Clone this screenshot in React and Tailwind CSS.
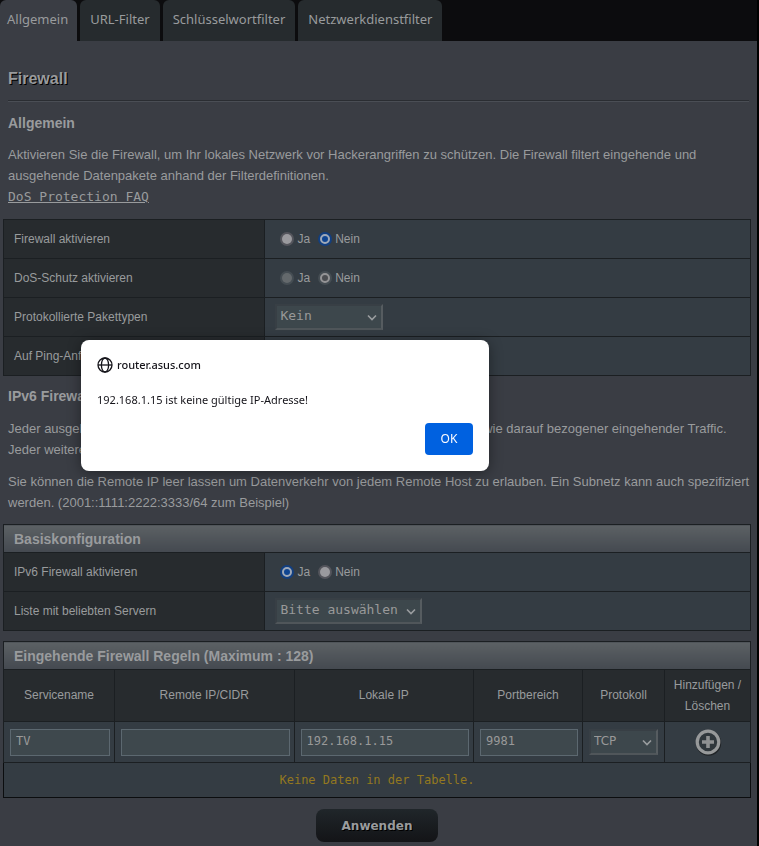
import { useState } from 'react';
import { clsx } from 'clsx';

const TABS = ['Allgemein', 'URL-Filter', 'Schlüsselwortfilter', 'Netzwerkdienstfilter'];

function Radio({ name, label, checked = false, disabled = false }) {
  return (
    <label className="flex items-center gap-[3px]">
      <input
        type="radio"
        name={name}
        defaultChecked={checked}
        disabled={disabled}
        className={clsx(
          'm-[2px] h-[10px] w-[10px] appearance-none rounded-full ring-2 checked:border-2',
          disabled
            ? 'bg-[#64696c] ring-[#454d53] checked:border-[#949496] checked:bg-[#4b4d51]'
            : 'bg-[#9a9a9e] ring-[#54555c] checked:border-[#9fa9b8] checked:bg-[#0f4592] checked:ring-[#123f80]'
        )}
      />
      {label}
    </label>
  );
}

function Select({ label, value, className }) {
  return (
    <div className="relative inline-block align-middle">
      <select
        aria-label={label}
        defaultValue={value}
        className={clsx(
          'block h-[26px] appearance-none border-2 border-t-[#383f45] border-r-[#565c60] border-b-[#50565a] border-l-[#383f45] bg-[#3d474c] pb-[2px] pl-[3px] text-[#999999]',
          className
        )}
      >
        <option>{value}</option>
      </select>
      <svg className="pointer-events-none absolute top-[10px] right-[6px] h-[8px] w-[10px]" viewBox="0 0 10 8" fill="none" stroke="#9a9d9f">
        <path strokeWidth="1.6" d="M1 1.5l4 4 4-4" />
      </svg>
    </div>
  );
}

function Row({ label, children }) {
  return (
    <tr className="h-[39px]">
      <th scope="row" className="w-[35%] border border-[#1b1f22] bg-[#272b2e] px-[10px] text-left font-normal">{label}</th>
      <td className="border border-[#1b1f22] bg-[#343c43] px-[10px]">{children}</td>
    </tr>
  );
}

function TableTitle({ children }) {
  return (
    <tr className="h-[28px]">
      <th
        colSpan={6}
        className="border border-[#1b1f22] bg-linear-to-b from-[#5c6164] to-[#444950] px-[10px] text-left text-[14px] leading-[20px] font-bold"
      >
        {children}
      </th>
    </tr>
  );
}

function Field({ label, value = '' }) {
  return (
    <td className="border border-[#1b1f22] bg-[#343c43] pr-[4px] pl-[6px]">
      <input
        type="text"
        aria-label={label}
        defaultValue={value}
        className="block h-[27px] w-full border border-[#5c6870] bg-[#3e484d] px-[5px] pb-[2px] font-['DejaVu_Sans_Mono',monospace] text-[12px] text-[#999999]"
      />
    </td>
  );
}

function AlertDialog({ onClose }) {
  return (
    <div
      role="alertdialog"
      aria-labelledby="alert-host"
      aria-describedby="alert-text"
      className="fixed top-[340px] left-[81px] w-[408px] rounded-lg bg-white p-4 font-['Noto_Sans',sans-serif] text-[11px] leading-4 text-[#15141a] shadow-[0_2px_14px_rgba(0,0,0,0.4)]"
    >
      <div id="alert-host" className="flex items-center gap-1 pt-px font-medium">
        <svg className="h-4 w-4" viewBox="0 0 16 16" fill="none" stroke="currentColor" strokeWidth="1.3">
          <circle cx="8" cy="8" r="7" />
          <ellipse cx="8" cy="8" rx="3.6" ry="7" />
          <path d="M1 8h14" />
        </svg>
        router.asus.com
      </div>
      <p id="alert-text" className="mt-[19px]">192.168.1.15 ist keine gültige IP-Adresse!</p>
      <div className="mt-[15px] flex justify-end">
        <button type="button" onClick={onClose} className="h-8 w-12 rounded bg-[#0061e0] text-[12px] text-[#fbfbfe]">
          OK
        </button>
      </div>
    </div>
  );
}

export default function App() {
  const [alertOpen, setAlertOpen] = useState(true);

  return (
    <div className="min-h-screen bg-black pr-[2px] font-['Liberation_Sans',Arial,sans-serif] text-[12px] text-[#999b9d]">
      <nav className="flex gap-[3px] bg-[#0c0c0e] font-['Noto_Sans',Verdana,sans-serif] text-[13px]">
        {TABS.map((tab, i) => (
          <a
            key={tab}
            href="#"
            className={clsx(
              'h-[41px] rounded-t-md pt-[11px] leading-[17px]',
              i === 0 ? 'bg-[#3a3d44] pr-[9px] pl-[7px]' : 'bg-[#262b2e] px-[10px]'
            )}
          >
            {tab}
          </a>
        ))}
      </nav>

      <main className="min-h-[805px] bg-[#3a3d44] pt-[27px] pr-[6px] pb-1 pl-[3px]">
        <div className="pl-[5px]">
          <h1 className="text-[16px] leading-[22px] font-bold [text-shadow:1px_1px_0_#000]">Firewall</h1>
          <hr className="mt-[10px] mr-[2px] border-t border-b border-t-[#2a2d32] border-b-[#4a4e55]" />
          <h2 className="mt-[11px] text-[14px] leading-[20px] font-bold">Allgemein</h2>
          <p className="mt-[11px] text-[13px] leading-[21px]">
            Aktivieren Sie die Firewall, um Ihr lokales Netzwerk vor Hackerangriffen zu schützen. Die Firewall filtert
            eingehende und ausgehende Datenpakete anhand der Filterdefinitionen.
          </p>
          <a href="#" className="block w-fit font-['DejaVu_Sans_Mono',monospace] text-[13px] leading-[21px] underline">
            DoS Protection FAQ
          </a>
        </div>

        <table className="mt-[12px] w-full border-collapse">
          <tbody>
            <Row label="Firewall aktivieren">
              <div className="flex gap-2 pl-[5px]">
                <Radio name="fw" label="Ja" />
                <Radio name="fw" label="Nein" checked />
              </div>
            </Row>
            <Row label="DoS-Schutz aktivieren">
              <div className="flex gap-2 pl-[5px]">
                <Radio name="dos" label="Ja" disabled />
                <Radio name="dos" label="Nein" checked disabled />
              </div>
            </Row>
            <Row label="Protokollierte Pakettypen">
              <Select label="Protokollierte Pakettypen" value="Kein" className="w-[108px] font-['DejaVu_Sans_Mono',monospace] text-[13px]" />
            </Row>
            <Row label="Auf Ping-Anfragen von WAN antworten">
              <div className="flex gap-2 pl-[5px]">
                <Radio name="ping" label="Ja" />
                <Radio name="ping" label="Nein" checked />
              </div>
            </Row>
          </tbody>
        </table>

        <div className="pl-[5px]">
          <h2 className="mt-[10px] text-[14px] leading-[20px] font-bold">IPv6 Firewall</h2>
          <p className="mt-[12px] text-[13px] leading-[21px]">
            Jeder ausgehende Traffic von IPv6 Hosts in Ihrem lokalen Netzwerk ist erlaubt, so wie darauf bezogener
            eingehender Traffic. Jeder weitere eingehende Traffic muss hier erlaubt werden.
          </p>
          <p className="mt-[11px] text-[13px] leading-[21px]">
            Sie können die Remote IP leer lassen um Datenverkehr von jedem Remote Host zu erlauben. Ein Subnetz kann auch
            spezifiziert werden. (2001::1111:2222:3333/64 zum Beispiel)
          </p>
        </div>

        <table className="mt-[11px] w-full border-collapse">
          <tbody>
            <TableTitle>Basiskonfiguration</TableTitle>
            <Row label="IPv6 Firewall aktivieren">
              <div className="flex gap-2 pl-[5px]">
                <Radio name="ipv6" label="Ja" checked />
                <Radio name="ipv6" label="Nein" />
              </div>
            </Row>
            <Row label="Liste mit beliebten Servern">
              <Select label="Liste mit beliebten Servern" value="Bitte auswählen" className="w-[147px] font-['DejaVu_Sans_Mono',monospace] text-[13px]" />
            </Row>
          </tbody>
        </table>

        <table className="mt-[10px] w-full table-fixed border-collapse">
          <colgroup>
            <col className="w-[111px]" />
            <col />
            <col />
            <col className="w-[109px]" />
            <col className="w-[82px]" />
            <col className="w-[86px]" />
          </colgroup>
          <thead>
            <TableTitle>Eingehende Firewall Regeln (Maximum : 128)</TableTitle>
            <tr className="h-[52px]">
              {['Servicename', 'Remote IP/CIDR', 'Lokale IP', 'Portbereich', 'Protokoll', 'Hinzufügen / Löschen'].map((name) => (
                <th key={name} className="border border-[#1b1f22] bg-[#272b2e] px-1 leading-[21px] font-normal">{name}</th>
              ))}
            </tr>
          </thead>
          <tbody>
            <tr className="h-[41px]">
              <Field label="Servicename" value="TV" />
              <Field label="Remote IP/CIDR" />
              <Field label="Lokale IP" value="192.168.1.15" />
              <Field label="Portbereich" value="9981" />
              <td className="border border-[#1b1f22] bg-[#343c43] px-[6px]">
                <Select label="Protokoll" value="TCP" className="w-[69px] font-['DejaVu_Sans',sans-serif] text-[12px]" />
              </td>
              <td className="border border-[#1b1f22] bg-[#343c43]">
                <button type="button" aria-label="Hinzufügen" className="mx-auto block h-[28px] w-[28px]">
                  <svg viewBox="0 0 28 28" fill="none">
                    <circle cx="14.5" cy="15" r="11" stroke="#202427" strokeWidth="3.4" />
                    <circle cx="14" cy="14" r="10.8" fill="#30373c" stroke="#97999a" strokeWidth="3.2" />
                    <path d="M14 8v12M8 14h12" stroke="#8f9192" strokeWidth="3.6" />
                  </svg>
                </button>
              </td>
            </tr>
            <tr className="h-[35px]">
              <td colSpan={6} className="border border-[#0b0d0f] bg-[#343c43] text-center font-['DejaVu_Sans_Mono',monospace] text-[12px] text-[#93781f]">
                Keine Daten in der Tabelle.
              </td>
            </tr>
          </tbody>
        </table>

        <button
          type="button"
          className="mx-auto mt-[11px] block h-[33px] w-[122px] rounded-lg bg-linear-to-b from-[#20262a] to-[#131417] font-['DejaVu_Sans',sans-serif] text-[12px] font-bold [text-shadow:1px_1px_0_#000]"
        >
          Anwenden
        </button>
      </main>

      {alertOpen && <AlertDialog onClose={() => setAlertOpen(false)} />}
    </div>
  );
}
